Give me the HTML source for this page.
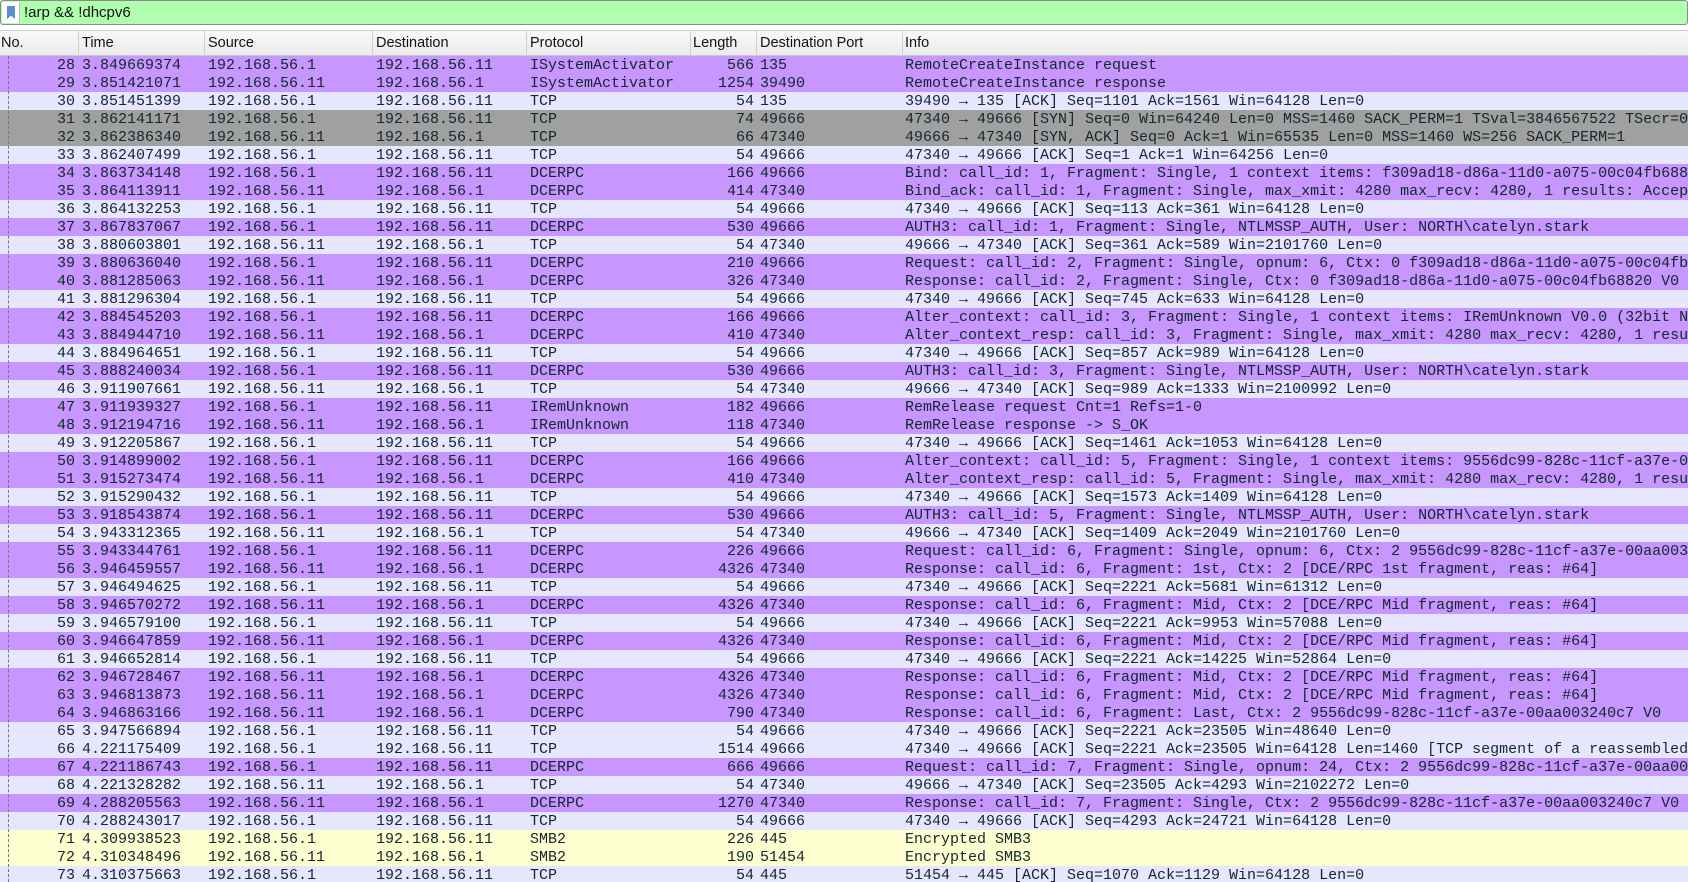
<!DOCTYPE html>
<html><head><meta charset="utf-8"><style>
*{margin:0;padding:0;box-sizing:border-box}
html,body{overflow:hidden}
body{width:1688px;height:882px;overflow:hidden;background:#fff;position:relative;font-family:"Liberation Sans",sans-serif}
#filter{position:absolute;left:0;top:0;width:1688px;height:25px;background:#afffaf;border:1px solid #8a8a8a;border-radius:3px}
#bm{position:absolute;left:1px;top:1px;width:18px;height:21px;background:#fff;border-right:1px solid #bbb}
#bm i{position:absolute;left:5px;top:4px;width:8px;height:13px;background:#5b8fd0;clip-path:polygon(0 0,100% 0,100% 100%,50% 75%,0 100%)}
#ftxt{position:absolute;left:23px;top:3px;font-size:15px;color:#111}
#hdr{position:absolute;left:0;top:30px;width:1688px;height:26px;background:linear-gradient(#f8f8f8,#ececec);border-top:1px solid #d0d0d0;border-bottom:1px solid #c8c8c8}
#hdr span{position:absolute;top:4px;font-size:14.5px;color:#111}
#hdr b{position:absolute;top:0;height:25px;width:1px;background:#cfcfcf}
#rows{position:absolute;left:0;top:0;width:1688px;height:882px;overflow:hidden}
.r{position:absolute;left:0;width:1688px;height:18px;overflow:hidden;font-family:"Liberation Mono",monospace;font-size:15px;color:#12272e;white-space:pre;line-height:19px}
.r span{position:absolute;top:0}
.n{right:1613px;text-align:right}
.t{left:82px}.s{left:208px}.d{left:376px}.p{left:530px}.l{right:934px;text-align:right}.dp{left:760px}.i{left:905px}
.P{background:#c797ff}.T{background:#e7e6ff}.G{background:#a0a0a0}.Y{background:#feffd0}
#line{position:absolute;left:8px;top:56px;width:0;height:826px;border-left:1px dashed #777}
</style></head><body>
<div id="filter"><div id="bm"><i></i></div><div id="ftxt">!arp &amp;&amp; !dhcpv6</div></div>
<div id="hdr">
<span style="left:1px">No.</span><b style="left:78px"></b>
<span style="left:82px">Time</span><b style="left:204px"></b>
<span style="left:208px">Source</span><b style="left:372px"></b>
<span style="left:376px">Destination</span><b style="left:526px"></b>
<span style="left:530px">Protocol</span><b style="left:690px"></b>
<span style="left:693px">Length</span><b style="left:756px"></b>
<span style="left:760px">Destination Port</span><b style="left:902px"></b>
<span style="left:905px">Info</span>
</div>
<div id="rows"></div>
<script>
const D=[
["P",28,"3.849669374","192.168.56.1","192.168.56.11","ISystemActivator",566,"135","RemoteCreateInstance request"],
["P",29,"3.851421071","192.168.56.11","192.168.56.1","ISystemActivator",1254,"39490","RemoteCreateInstance response"],
["T",30,"3.851451399","192.168.56.1","192.168.56.11","TCP",54,"135","39490 → 135 [ACK] Seq=1101 Ack=1561 Win=64128 Len=0"],
["G",31,"3.862141171","192.168.56.1","192.168.56.11","TCP",74,"49666","47340 → 49666 [SYN] Seq=0 Win=64240 Len=0 MSS=1460 SACK_PERM=1 TSval=3846567522 TSecr=0 WS=128"],
["G",32,"3.862386340","192.168.56.11","192.168.56.1","TCP",66,"47340","49666 → 47340 [SYN, ACK] Seq=0 Ack=1 Win=65535 Len=0 MSS=1460 WS=256 SACK_PERM=1"],
["T",33,"3.862407499","192.168.56.1","192.168.56.11","TCP",54,"49666","47340 → 49666 [ACK] Seq=1 Ack=1 Win=64256 Len=0"],
["P",34,"3.863734148","192.168.56.1","192.168.56.11","DCERPC",166,"49666","Bind: call_id: 1, Fragment: Single, 1 context items: f309ad18-d86a-11d0-a075-00c04fb68820"],
["P",35,"3.864113911","192.168.56.11","192.168.56.1","DCERPC",414,"47340","Bind_ack: call_id: 1, Fragment: Single, max_xmit: 4280 max_recv: 4280, 1 results: Acceptance"],
["T",36,"3.864132253","192.168.56.1","192.168.56.11","TCP",54,"49666","47340 → 49666 [ACK] Seq=113 Ack=361 Win=64128 Len=0"],
["P",37,"3.867837067","192.168.56.1","192.168.56.11","DCERPC",530,"49666","AUTH3: call_id: 1, Fragment: Single, NTLMSSP_AUTH, User: NORTH\\catelyn.stark"],
["T",38,"3.880603801","192.168.56.11","192.168.56.1","TCP",54,"47340","49666 → 47340 [ACK] Seq=361 Ack=589 Win=2101760 Len=0"],
["P",39,"3.880636040","192.168.56.1","192.168.56.11","DCERPC",210,"49666","Request: call_id: 2, Fragment: Single, opnum: 6, Ctx: 0 f309ad18-d86a-11d0-a075-00c04fb68820"],
["P",40,"3.881285063","192.168.56.11","192.168.56.1","DCERPC",326,"47340","Response: call_id: 2, Fragment: Single, Ctx: 0 f309ad18-d86a-11d0-a075-00c04fb68820 V0"],
["T",41,"3.881296304","192.168.56.1","192.168.56.11","TCP",54,"49666","47340 → 49666 [ACK] Seq=745 Ack=633 Win=64128 Len=0"],
["P",42,"3.884545203","192.168.56.1","192.168.56.11","DCERPC",166,"49666","Alter_context: call_id: 3, Fragment: Single, 1 context items: IRemUnknown V0.0 (32bit NDR)"],
["P",43,"3.884944710","192.168.56.11","192.168.56.1","DCERPC",410,"47340","Alter_context_resp: call_id: 3, Fragment: Single, max_xmit: 4280 max_recv: 4280, 1 results"],
["T",44,"3.884964651","192.168.56.1","192.168.56.11","TCP",54,"49666","47340 → 49666 [ACK] Seq=857 Ack=989 Win=64128 Len=0"],
["P",45,"3.888240034","192.168.56.1","192.168.56.11","DCERPC",530,"49666","AUTH3: call_id: 3, Fragment: Single, NTLMSSP_AUTH, User: NORTH\\catelyn.stark"],
["T",46,"3.911907661","192.168.56.11","192.168.56.1","TCP",54,"47340","49666 → 47340 [ACK] Seq=989 Ack=1333 Win=2100992 Len=0"],
["P",47,"3.911939327","192.168.56.1","192.168.56.11","IRemUnknown",182,"49666","RemRelease request Cnt=1 Refs=1-0"],
["P",48,"3.912194716","192.168.56.11","192.168.56.1","IRemUnknown",118,"47340","RemRelease response -> S_OK"],
["T",49,"3.912205867","192.168.56.1","192.168.56.11","TCP",54,"49666","47340 → 49666 [ACK] Seq=1461 Ack=1053 Win=64128 Len=0"],
["P",50,"3.914899002","192.168.56.1","192.168.56.11","DCERPC",166,"49666","Alter_context: call_id: 5, Fragment: Single, 1 context items: 9556dc99-828c-11cf-a37e-00aa003240c7"],
["P",51,"3.915273474","192.168.56.11","192.168.56.1","DCERPC",410,"47340","Alter_context_resp: call_id: 5, Fragment: Single, max_xmit: 4280 max_recv: 4280, 1 results"],
["T",52,"3.915290432","192.168.56.1","192.168.56.11","TCP",54,"49666","47340 → 49666 [ACK] Seq=1573 Ack=1409 Win=64128 Len=0"],
["P",53,"3.918543874","192.168.56.1","192.168.56.11","DCERPC",530,"49666","AUTH3: call_id: 5, Fragment: Single, NTLMSSP_AUTH, User: NORTH\\catelyn.stark"],
["T",54,"3.943312365","192.168.56.11","192.168.56.1","TCP",54,"47340","49666 → 47340 [ACK] Seq=1409 Ack=2049 Win=2101760 Len=0"],
["P",55,"3.943344761","192.168.56.1","192.168.56.11","DCERPC",226,"49666","Request: call_id: 6, Fragment: Single, opnum: 6, Ctx: 2 9556dc99-828c-11cf-a37e-00aa003240c7"],
["P",56,"3.946459557","192.168.56.11","192.168.56.1","DCERPC",4326,"47340","Response: call_id: 6, Fragment: 1st, Ctx: 2 [DCE/RPC 1st fragment, reas: #64]"],
["T",57,"3.946494625","192.168.56.1","192.168.56.11","TCP",54,"49666","47340 → 49666 [ACK] Seq=2221 Ack=5681 Win=61312 Len=0"],
["P",58,"3.946570272","192.168.56.11","192.168.56.1","DCERPC",4326,"47340","Response: call_id: 6, Fragment: Mid, Ctx: 2 [DCE/RPC Mid fragment, reas: #64]"],
["T",59,"3.946579100","192.168.56.1","192.168.56.11","TCP",54,"49666","47340 → 49666 [ACK] Seq=2221 Ack=9953 Win=57088 Len=0"],
["P",60,"3.946647859","192.168.56.11","192.168.56.1","DCERPC",4326,"47340","Response: call_id: 6, Fragment: Mid, Ctx: 2 [DCE/RPC Mid fragment, reas: #64]"],
["T",61,"3.946652814","192.168.56.1","192.168.56.11","TCP",54,"49666","47340 → 49666 [ACK] Seq=2221 Ack=14225 Win=52864 Len=0"],
["P",62,"3.946728467","192.168.56.11","192.168.56.1","DCERPC",4326,"47340","Response: call_id: 6, Fragment: Mid, Ctx: 2 [DCE/RPC Mid fragment, reas: #64]"],
["P",63,"3.946813873","192.168.56.11","192.168.56.1","DCERPC",4326,"47340","Response: call_id: 6, Fragment: Mid, Ctx: 2 [DCE/RPC Mid fragment, reas: #64]"],
["P",64,"3.946863166","192.168.56.11","192.168.56.1","DCERPC",790,"47340","Response: call_id: 6, Fragment: Last, Ctx: 2 9556dc99-828c-11cf-a37e-00aa003240c7 V0"],
["T",65,"3.947566894","192.168.56.1","192.168.56.11","TCP",54,"49666","47340 → 49666 [ACK] Seq=2221 Ack=23505 Win=48640 Len=0"],
["T",66,"4.221175409","192.168.56.1","192.168.56.11","TCP",1514,"49666","47340 → 49666 [ACK] Seq=2221 Ack=23505 Win=64128 Len=1460 [TCP segment of a reassembled PDU]"],
["P",67,"4.221186743","192.168.56.1","192.168.56.11","DCERPC",666,"49666","Request: call_id: 7, Fragment: Single, opnum: 24, Ctx: 2 9556dc99-828c-11cf-a37e-00aa003240c7"],
["T",68,"4.221328282","192.168.56.11","192.168.56.1","TCP",54,"47340","49666 → 47340 [ACK] Seq=23505 Ack=4293 Win=2102272 Len=0"],
["P",69,"4.288205563","192.168.56.11","192.168.56.1","DCERPC",1270,"47340","Response: call_id: 7, Fragment: Single, Ctx: 2 9556dc99-828c-11cf-a37e-00aa003240c7 V0"],
["T",70,"4.288243017","192.168.56.1","192.168.56.11","TCP",54,"49666","47340 → 49666 [ACK] Seq=4293 Ack=24721 Win=64128 Len=0"],
["Y",71,"4.309938523","192.168.56.1","192.168.56.11","SMB2",226,"445","Encrypted SMB3"],
["Y",72,"4.310348496","192.168.56.11","192.168.56.1","SMB2",190,"51454","Encrypted SMB3"],
["T",73,"4.310375663","192.168.56.1","192.168.56.11","TCP",54,"445","51454 → 445 [ACK] Seq=1070 Ack=1129 Win=64128 Len=0"]];
const esc=s=>String(s).replace(/&/g,"&amp;").replace(/</g,"&lt;").replace(/>/g,"&gt;");
let h="";
D.forEach((r,k)=>{h+=`<div class="r ${r[0]}" style="top:${56+k*18}px"><span class="n">${r[1]}</span><span class="t">${r[2]}</span><span class="s">${r[3]}</span><span class="d">${r[4]}</span><span class="p">${r[5]}</span><span class="l">${r[6]}</span><span class="dp">${r[7]}</span><span class="i">${esc(r[8])}</span></div>`});
document.getElementById("rows").innerHTML=h+'<div id="line"></div>';
</script>
</body></html>
